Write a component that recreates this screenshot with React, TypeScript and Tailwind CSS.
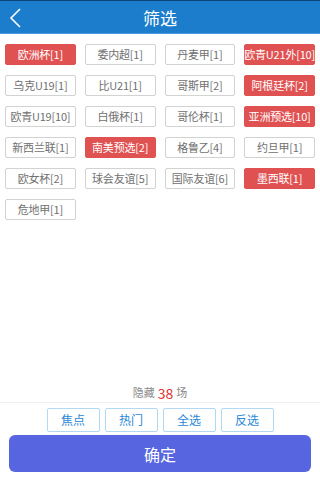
import React from "react";

const items: { t: string; on?: boolean }[] = [
  { t: "欧洲杯[1]", on: true },
  { t: "委内超[1]" },
  { t: "丹麦甲[1]" },
  { t: "欧青U21外[10]", on: true },
  { t: "乌克U19[1]" },
  { t: "比U21[1]" },
  { t: "哥斯甲[2]" },
  { t: "阿根廷杯[2]", on: true },
  { t: "欧青U19[10]" },
  { t: "白俄杯[1]" },
  { t: "哥伦杯[1]" },
  { t: "亚洲预选[10]", on: true },
  { t: "新西兰联[1]" },
  { t: "南美预选[2]", on: true },
  { t: "格鲁乙[4]" },
  { t: "约旦甲[1]" },
  { t: "欧女杯[2]" },
  { t: "球会友谊[5]" },
  { t: "国际友谊[6]" },
  { t: "墨西联[1]", on: true },
  { t: "危地甲[1]" },
];

export default function App() {
  const font = { fontFamily: '"Noto Sans CJK SC", "Noto Sans", Roboto, sans-serif' };
  return (
    <div className="w-[320px] h-[480px] flex flex-col bg-white overflow-hidden" style={font}>
      <div className="h-[34px] bg-[#1b7dcc] border-t border-[#0d4477] border-b border-b-[#4a9ae0] relative flex items-center justify-center">
        <svg className="absolute left-[8px] top-[7px]" width="14" height="20" viewBox="0 0 14 20">
          <path d="M12 1 L3 10 L12 19" fill="none" stroke="white" strokeWidth="1.6" />
        </svg>
        <span className="text-white text-[17px] leading-none">筛选</span>
      </div>
      <div className="flex-1 px-[5px] pt-[10px]">
        <div className="grid grid-cols-4 gap-x-[9px] gap-y-[10px]">
          {items.map((it, i) => (
            <div
              key={i}
              className={
                it.on
                  ? "h-[21px] rounded-[2px] bg-[#e05252] border border-[#e05252] text-white text-[11px] tracking-[-0.2px] flex items-center justify-center whitespace-nowrap"
                  : "h-[21px] rounded-[2px] bg-white border border-[#d2d2d2] text-[#707070] text-[11px] tracking-[-0.2px] flex items-center justify-center whitespace-nowrap"
              }
            >
              {it.t}
            </div>
          ))}
        </div>
      </div>
      <div className="flex flex-col">
        <div className="h-[20px] border-b border-[#eeeeee] flex items-center justify-center text-[11px] text-[#888888]">
          <span>隐藏</span>
          <span className="text-[#e03030] text-[14px] mx-[3px] leading-none">38</span>
          <span>场</span>
        </div>
        <div className="mt-[5px] h-[24px] flex justify-center gap-[5px]">
          {["焦点", "热门", "全选", "反选"].map((t) => (
            <div
              key={t}
              className="w-[53px] h-[24px] rounded-[2px] border border-[#b3d8f2] text-[#2a88d6] text-[12px] flex items-center justify-center"
            >
              {t}
            </div>
          ))}
        </div>
        <div className="mt-[3px] mx-[9px] mb-[8px] h-[37px] rounded-[6px] bg-[#5865e0] text-white text-[16px] flex items-center justify-center">
          确定
        </div>
      </div>
    </div>
  );
}
